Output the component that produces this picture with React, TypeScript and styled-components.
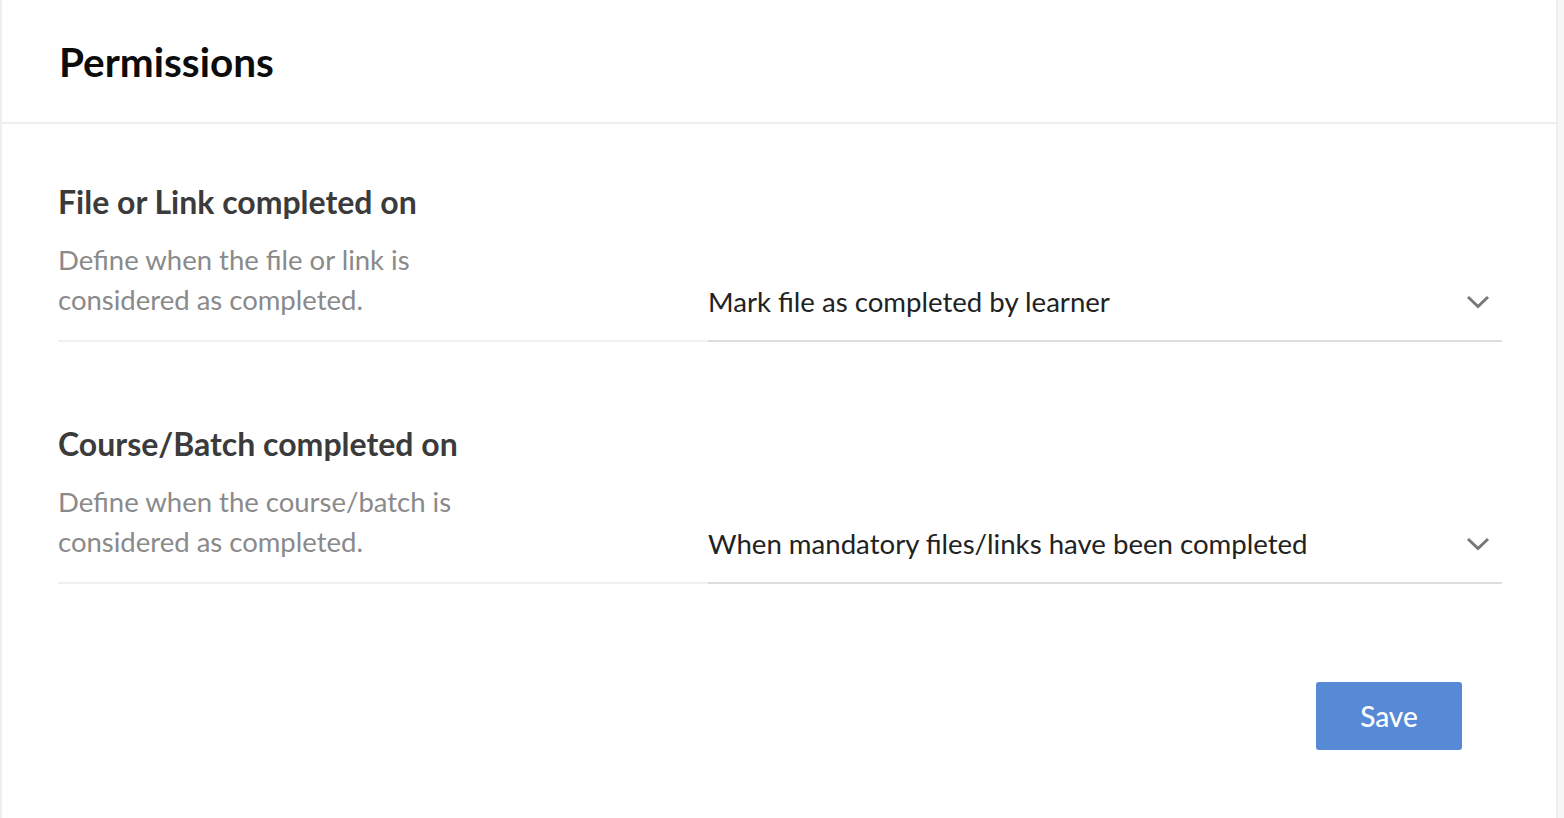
import React from "react";
import styled, { createGlobalStyle } from "styled-components";

const GlobalStyle = createGlobalStyle`
  html, body { margin: 0; padding: 0; background: #f6f7f9; }
  body { font-family: Lato, "Open Sans", sans-serif; }
  * { box-sizing: border-box; }
`;

const Page = styled.div`
  display: flex;
  height: 818px;
  background: #f6f7f9;
`;

const Panel = styled.div`
  width: 1558px;
  height: 818px;
  background: #fff;
  border-left: 2px solid #eeeeee;
  border-right: 2px solid #eeeeee;
  display: flex;
  flex-direction: column;
`;

const Header = styled.div`
  height: 124px;
  border-bottom: 2px solid #eeeeee;
  display: flex;
  align-items: center;
  padding-left: 57px;
`;

const Title = styled.h1`
  margin: 0;
  font-size: 40.5px;
  font-weight: 700;
  color: #0c0c0c;
  line-height: 1;
  padding-top: 2px;
`;

const Body = styled.div`
  padding: 58px 54px 0 56px;
  display: flex;
  flex-direction: column;
`;

const Row = styled.div`
  display: flex;
  align-items: flex-end;
  margin-bottom: 82px;
`;

const Info = styled.div`
  width: 650px;
  border-bottom: 2px solid #f0f0f0;
  padding-bottom: 20px;
`;

const RowTitle = styled.h2`
  margin: 0 0 18px;
  font-size: 32px;
  font-weight: 700;
  color: #3b3b3b;
  line-height: 40px;
`;

const Desc = styled.p`
  margin: 0;
  font-size: 27.5px;
  color: #8a8a8a;
  line-height: 40px;
  width: 440px;
`;

const Select = styled.div`
  flex: 1;
  border-bottom: 2px solid #dddddd;
  display: flex;
  align-items: center;
  justify-content: space-between;
  padding: 0 12px 18px 0;
  cursor: pointer;
`;

const SelectText = styled.span`
  font-size: 27.6px;
  color: #222;
  line-height: 40px;
`;

const Footer = styled.div`
  display: flex;
  justify-content: flex-end;
  padding-right: 40px;
  margin-top: 16px;
`;

const SaveButton = styled.button`
  width: 146px;
  height: 68px;
  border: none;
  border-radius: 3px;
  background: #568ad6;
  color: #fff;
  font-family: Lato, sans-serif;
  font-size: 28px;
  font-weight: 500;
  cursor: pointer;
`;

const Chevron = () => (
  <svg width="24" height="16" viewBox="0 0 24 16">
    <path d="M2 3 L12 12.5 L22 3" fill="none" stroke="#777" strokeWidth="3" />
  </svg>
);

const rows = [
  {
    title: "File or Link completed on",
    desc: "Define when the file or link is considered as completed.",
    value: "Mark file as completed by learner",
  },
  {
    title: "Course/Batch completed on",
    desc: "Define when the course/batch is considered as completed.",
    value: "When mandatory files/links have been completed",
  },
];

export default function App() {
  return (
    <Page>
      <GlobalStyle />
      <Panel>
        <Header>
          <Title>Permissions</Title>
        </Header>
        <Body>
          {rows.map((r) => (
            <Row key={r.title}>
              <Info>
                <RowTitle>{r.title}</RowTitle>
                <Desc>{r.desc}</Desc>
              </Info>
              <Select>
                <SelectText>{r.value}</SelectText>
                <Chevron />
              </Select>
            </Row>
          ))}
          <Footer>
            <SaveButton>Save</SaveButton>
          </Footer>
        </Body>
      </Panel>
    </Page>
  );
}
